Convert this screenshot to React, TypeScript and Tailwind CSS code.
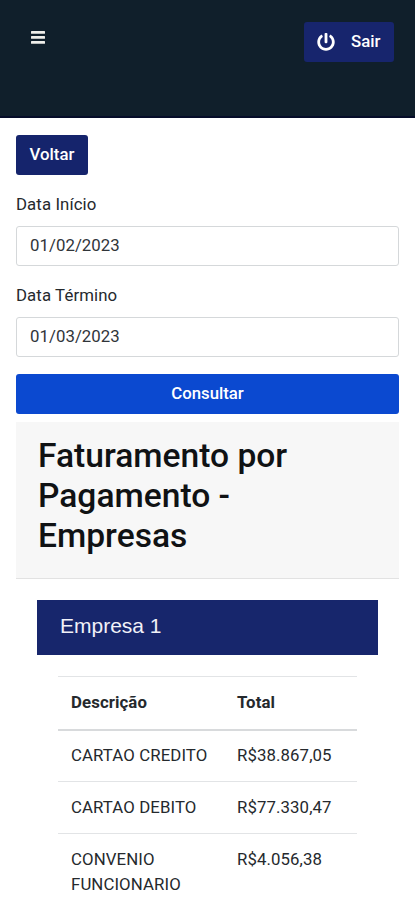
import { FaPowerOff } from "react-icons/fa";

const payments = [
  { description: "CARTAO CREDITO", total: "R$38.867,05" },
  { description: "CARTAO DEBITO", total: "R$77.330,47" },
  { description: "CONVENIO FUNCIONARIO", total: "R$4.056,38" },
];

function DateField({ label, value }: { label: string; value: string }) {
  return (
    <label className="block h-[91px]">
      <span className="block h-[34px] leading-[25px]">{label}</span>
      <input
        type="text"
        defaultValue={value}
        className="block w-full h-10 px-[13px] pb-[3px] rounded-[3px] border border-[#d5d8da] bg-white text-[#30353a] tracking-[0.05px]"
      />
    </label>
  );
}

function MenuIcon() {
  return (
    <svg viewBox="0 0 14 13" className="h-[13px] w-[14px]" fill="#eeeeea">
      <rect y="0" width="14" height="2.7" rx="0.5" />
      <rect y="5" width="14" height="2.7" rx="0.5" />
      <rect y="10" width="14" height="2.7" rx="0.5" />
    </svg>
  );
}

export default function App() {
  return (
    <div className="h-[900px] overflow-hidden bg-white font-['Roboto',sans-serif] text-[16.8px] tracking-[0.1px] text-[#25292d]">
      <header className="flex h-[118px] items-start justify-between border-b-2 border-[#050c29] bg-[#101f2b] pt-[22px] pl-[30.5px] pr-[21px] text-white">
        <button className="mt-[9px]" aria-label="Menu">
          <MenuIcon />
        </button>
        <button className="flex h-10 w-[90px] items-center rounded-[3px] bg-[#17256d] pb-px pl-[13px] font-medium tracking-normal">
          <FaPowerOff className="size-[18px]" />
          <span className="ml-4">Sair</span>
        </button>
      </header>

      <main className="px-4 pt-[17px]">
        <button className="block h-10 w-[72px] rounded-[3px] bg-[#15246c] pb-px font-medium tracking-normal text-white">
          Voltar
        </button>

        <form className="mt-[17px]">
          <DateField label="Data Início" value="01/02/2023" />
          <DateField label="Data Término" value="01/03/2023" />
          <button
            type="button"
            className="block h-10 w-full rounded-[3px] bg-[#0b49d0] pb-px font-medium tracking-normal text-white"
          >
            Consultar
          </button>
        </form>

        <section className="mt-2">
          <div className="h-[157px] border-b border-[#e2e2e2] bg-[#f7f7f7] px-[22px] pt-[14px]">
            <h1 className="text-[33.6px] font-medium leading-[40px] tracking-normal text-[#101214]">
              Faturamento por
              <br />
              Pagamento -
              <br />
              Empresas
            </h1>
          </div>

          <div className="px-[21px] pt-[21px]">
            <h2 className="flex h-[55px] items-center bg-[#17266c] pl-[23px] pb-1 font-['Liberation_Sans',sans-serif] text-[21px] tracking-normal text-[#f1f1f8]">
              Empresa 1
            </h2>

            <table className="mx-[21px] mt-[21px] w-[299px] table-fixed border-collapse text-left align-top leading-[25px]">
              <thead>
                <tr className="h-[53px] border-t border-b-2 border-t-[#e2e4e6] border-b-[#d8dadc]">
                  <th className="w-[166px] pl-[13px] font-bold">Descrição</th>
                  <th className="pl-[13px] font-bold">Total</th>
                </tr>
              </thead>
              <tbody>
                {payments.map((payment) => (
                  <tr
                    key={payment.description}
                    className="group h-[52px] border-b border-[#e2e4e6] align-top"
                  >
                    <td className="pt-[13px] pb-3 pl-[13px] pr-3 group-first:pt-3">
                      {payment.description}
                    </td>
                    <td className="pt-[13px] pb-3 pl-[13px] group-first:pt-3">
                      {payment.total}
                    </td>
                  </tr>
                ))}
              </tbody>
            </table>
          </div>
        </section>
      </main>
    </div>
  );
}
